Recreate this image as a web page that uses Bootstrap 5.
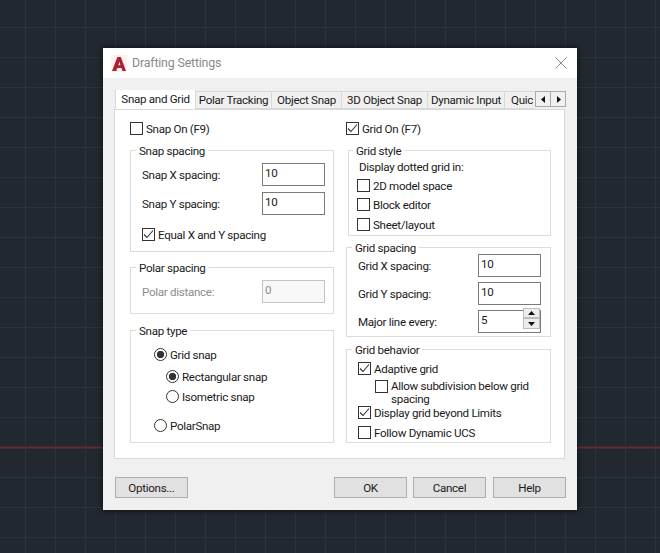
<!doctype html>
<html lang="en"><head><meta charset="utf-8"><title>Drafting Settings</title>
<link href="https://cdn.jsdelivr.net/npm/bootstrap@5.3.0/dist/css/bootstrap.min.css" rel="stylesheet">
<style>
html{height:553px}
body{margin:0;height:553px;overflow:hidden;position:relative;color:#1a1a1a;font:11.6px/16px Roboto,sans-serif;letter-spacing:-.3px;
 background-color:#212830;
 background-image:linear-gradient(90deg,#2b333d 1px,transparent 1px),linear-gradient(#2a323b 1px,transparent 1px);
 background-size:30px 30px,30px 30px;background-position:25px 0,0 27px;padding:48px 0 0 103px}
.axis{position:absolute;left:0;right:0;top:446px;height:3px;background:linear-gradient(#332830,#5f2c35 40%,#5f2c35 60%,#332830)}
.dlg{position:relative;width:474px;height:462px;background:#f0f0f0;box-shadow:0 0 6px rgba(0,0,0,.7)}
.ttl{height:30px;background:#fff;padding:0 10px 0 8px;color:#8a8a8a;font-size:12.4px;letter-spacing:-.18px}
.logo{width:16px;height:17px;margin-right:5px}
.tabbar{height:19px;margin:12px 11px 0 12px;position:relative;z-index:1}
.tabclip{overflow:hidden;width:420px;flex:none}
.dtab{height:18px;margin-top:1px;background:#f0f0f0;border:1px solid #d9d9d9;border-left:0;text-align:center;flex:none;line-height:16px;white-space:nowrap}
.dtab.on{height:21px;margin-top:-1px;background:#fff;border:1px solid #d9d9d9;border-bottom:0;padding-top:1px}
.w81{width:81px}.w76{width:76px}.w70{width:70px}.w86{width:86px}.w77{width:77px}
.dtab.qk{width:60px;text-align:left;padding-left:6px;border-right:0}
.arrows{margin-top:1px}
.arw{width:16px;height:16px;background:#f0f0f0;border:1px solid #aaa}
.arw+.arw{margin-left:-1px}
.pane{width:451px;height:350px;margin:0 0 0 11px;background:#fff;border:1px solid #d9d9d9;padding:12px 12px 0 15px;gap:12px}
.lcol{width:204px}.rcol{width:205px}
.form-check-input.tick,.form-check-input.rad{width:13px;height:13px;margin:0;border:1px solid #333;flex:none;background-color:#fff;float:none}
.form-check-input.tick{border-radius:0}
input.form-check-input.tick:checked[type=checkbox]{background-color:#fff;border-color:#333;background-image:url("data:image/svg+xml,%3Csvg xmlns='http://www.w3.org/2000/svg' viewBox='0 0 13 13'%3E%3Cpath d='M2 6.500l3 3 6-7' fill='none' stroke='%23333' stroke-width='1.100'/%3E%3C/svg%3E");background-size:13px 13px}
input.form-check-input.rad:checked[type=radio]{background-color:#fff;border-color:#333;background-image:radial-gradient(circle,#333 0,#333 3.4px,transparent 4px);background-size:auto}
.ck{gap:3px;align-items:center;height:13px;white-space:nowrap}
fieldset.grp{border:1px solid #dcdcdc;min-width:0;margin:0;padding:0 8px 0 11px}
fieldset.grp legend{float:none;width:auto;margin:0 0 0 -6px;padding:2px 3px 0;font-size:11.6px;line-height:14px}
fieldset.h1g{height:110px;margin-top:7px}
fieldset.h2g{height:55px;margin-top:7px}
fieldset.h3g{height:121px;margin-top:8px}
fieldset.h4g{height:94px;margin:7px 0 0 2px;padding:0 0 0 10px}
fieldset.h5g{height:97px;margin-top:4px;padding-right:9px}
fieldset.h6g{height:102px;margin-top:4px}
fieldset.h5g legend{line-height:12px}
.vv{width:63px;height:23px;border:1px solid #7a7a7a;background:#fff;padding:0 0 4px 2px;font-size:11.6px;line-height:16px;border-radius:0;color:#1a1a1a;flex:none;letter-spacing:-.3px}
.vv.form-control:disabled{background:#f8f8f8;border-color:#c4c4c4;color:#8c8c8c}
.frow{height:23px}.mt6{margin-top:6px}.mt5{margin-top:5px}
.dim{color:#8c8c8c}
.spin{width:63px;height:23px;border:1px solid #7a7a7a;background:#fff;padding:0 0 3px 2px;flex:none}
.spb{width:17px;height:10px;background:#ececec;border:1px solid #bdbdbd}
.spb+.spb{height:11px}
.spb-wrap{margin-top:-3px}
.foot{margin:18px 11px 0 12px}
.btn.wb{width:73px;height:21px;padding:1px 0 0;background:#e1e1e1;border:1px solid #adadad;border-radius:0;font-size:11.6px;line-height:19px;color:#1a1a1a;letter-spacing:-.3px}
.lab-eq{margin-top:13px}
.rd1{margin:10px 0 0 12px}.rd2{margin:9px 0 0 24px}.rd3{margin:7px 0 0 24px}.rd4{margin:16px 0 0 12px}
.ds1{margin-top:1px;height:16px}
.cb0{margin-top:4px;margin-left:-2px}
.cb1{margin-top:6px;margin-left:-2px}
.cb2{margin-top:7px;margin-left:-2px}
.bh1{margin-top:5px}.bh2{margin:5px 0 0 17px;gap:3px;line-height:13px;white-space:nowrap}.bh3{margin-top:0}.bh4{margin-top:7px}
.gap6{margin-left:6px}.gap7{margin-left:7px}
</style></head><body>
<div class="axis"></div>
<div class="dlg d-flex flex-column">
 <div class="ttl d-flex align-items-center">
  <svg class="logo" viewBox="0 0 16 17"><rect width="16" height="17" fill="#fdf0ef"/><path d="M1 16 6.400 2h3.400L15 16h-3.600l-1-3H6.600l-1 1.200V16zM7.400 10.200h2L8.500 6.600z" fill="#ad2030"/></svg>
  <span class="flex-grow-1">Drafting Settings</span>
  <svg width="12" height="12" viewBox="0 0 12 12"><path d="M.5.5l11 11M11.500.5l-11 11" stroke="#8a8a8a" fill="none"/></svg>
 </div>
 <div class="tabbar d-flex">
  <div class="tabclip d-flex">
   <div class="dtab on w81">Snap and Grid</div>
   <div class="dtab w76">Polar Tracking</div>
   <div class="dtab w70">Object Snap</div>
   <div class="dtab w86">3D Object Snap</div>
   <div class="dtab w77">Dynamic Input</div>
   <div class="dtab qk">Quic</div>
  </div>
  <div class="arrows d-flex">
   <div class="arw d-flex align-items-center justify-content-center"><svg width="5" height="7"><path d="M4 0v7L0 3.500z" fill="#111"/></svg></div>
   <div class="arw d-flex align-items-center justify-content-center"><svg width="5" height="7"><path d="M1 0v7l4-3.500z" fill="#111"/></svg></div>
  </div>
 </div>
 <div class="pane d-flex">
  <div class="lcol">
   <label class="ck d-flex"><input class="form-check-input tick" type="checkbox"><span>Snap On (F9)</span></label>
   <fieldset class="grp h1g"><legend>Snap spacing</legend>
    <div class="frow mt5 d-flex justify-content-between align-items-center"><span>Snap X spacing:</span><input class="vv form-control" value="10"></div>
    <div class="frow mt6 d-flex justify-content-between align-items-center"><span>Snap Y spacing:</span><input class="vv form-control" value="10"></div>
    <label class="ck d-flex lab-eq"><input class="form-check-input tick" type="checkbox" checked><span>Equal X and Y spacing</span></label>
   </fieldset>
   <fieldset class="grp h2g"><legend>Polar spacing</legend>
    <div class="frow mt5 d-flex justify-content-between align-items-center dim"><span>Polar distance:</span><input class="vv form-control" value="0" disabled></div>
   </fieldset>
   <fieldset class="grp h3g"><legend>Snap type</legend>
    <label class="ck d-flex rd1"><input class="form-check-input rad" type="radio" name="a" checked><span>Grid snap</span></label>
    <label class="ck d-flex rd2"><input class="form-check-input rad" type="radio" name="b" checked><span>Rectangular snap</span></label>
    <label class="ck d-flex rd3"><input class="form-check-input rad" type="radio" name="b"><span>Isometric snap</span></label>
    <label class="ck d-flex rd4"><input class="form-check-input rad" type="radio" name="a"><span>PolarSnap</span></label>
   </fieldset>
  </div>
  <div class="rcol">
   <label class="ck d-flex"><input class="form-check-input tick" type="checkbox" checked><span>Grid On (F7)</span></label>
   <fieldset class="grp h4g"><legend>Grid style</legend>
    <div class="ds1">Display dotted grid in:</div>
    <label class="ck d-flex cb0"><input class="form-check-input tick" type="checkbox"><span>2D model space</span></label>
    <label class="ck d-flex cb1"><input class="form-check-input tick" type="checkbox"><span>Block editor</span></label>
    <label class="ck d-flex cb2"><input class="form-check-input tick" type="checkbox"><span>Sheet/layout</span></label>
   </fieldset>
   <fieldset class="grp h5g"><legend>Grid spacing</legend>
    <div class="frow d-flex justify-content-between align-items-center"><span>Grid X spacing:</span><input class="vv form-control" value="10"></div>
    <div class="frow mt5 d-flex justify-content-between align-items-center"><span>Grid Y spacing:</span><input class="vv form-control" value="10"></div>
    <div class="frow mt5 d-flex justify-content-between align-items-center"><span>Major line every:</span>
     <div class="spin d-flex align-items-center justify-content-between"><span>5</span>
      <div class="d-flex flex-column spb-wrap">
       <div class="spb d-flex align-items-center justify-content-center"><svg width="7" height="4"><path d="M3.500 0 7 4H0z" fill="#111"/></svg></div>
       <div class="spb d-flex align-items-center justify-content-center"><svg width="7" height="4"><path d="M3.500 4 7 0H0z" fill="#111"/></svg></div>
      </div>
     </div>
    </div>
   </fieldset>
   <fieldset class="grp h6g"><legend>Grid behavior</legend>
    <label class="ck d-flex bh1"><input class="form-check-input tick" type="checkbox" checked><span>Adaptive grid</span></label>
    <label class="d-flex bh2"><input class="form-check-input tick" type="checkbox"><span>Allow subdivision below grid<br>spacing</span></label>
    <label class="ck d-flex bh3"><input class="form-check-input tick" type="checkbox" checked><span>Display grid beyond Limits</span></label>
    <label class="ck d-flex bh4"><input class="form-check-input tick" type="checkbox"><span>Follow Dynamic UCS</span></label>
   </fieldset>
  </div>
 </div>
 <div class="foot d-flex">
  <button class="btn wb me-auto" type="button">Options...</button>
  <button class="btn wb" type="button">OK</button>
  <button class="btn wb gap6" type="button">Cancel</button>
  <button class="btn wb gap7" type="button">Help</button>
 </div>
</div>
</body></html>
